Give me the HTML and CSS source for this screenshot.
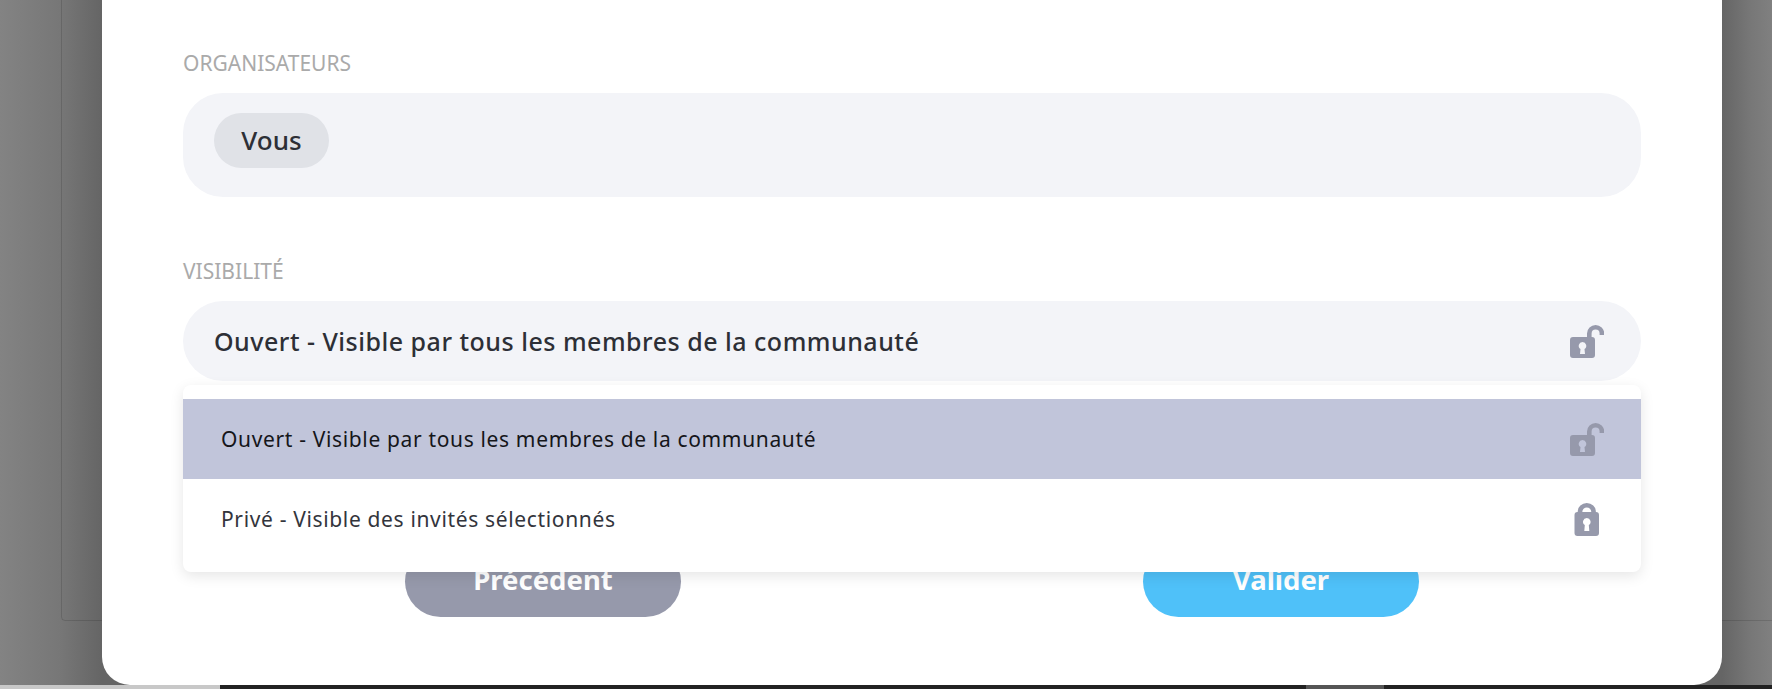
FILE: index.html
```html
<!DOCTYPE html>
<html lang="fr">

<head>
    <meta charset="UTF-8">
    <title>Organisateurs</title>
    <link rel="stylesheet" href="styles.css">
</head>

<body>
    <div class="behind"></div>

    <main class="modal">
        <h3 class="label">ORGANISATEURS</h3>
        <div class="box organisers">
            <span class="chip">Vous</span>
        </div>

        <h3 class="label second">VISIBILITÉ</h3>
        <div class="select">
            <div class="box chosen">
                <span>Ouvert - Visible par tous les membres de la communauté</span>
                <svg class="icon" viewBox="0 0 34 34"><use href="#open"></use></svg>
            </div>

            <ul class="dropdown">
                <li class="option active">
                    <span>Ouvert - Visible par tous les membres de la communauté</span>
                    <svg class="icon" viewBox="0 0 34 34"><use href="#open"></use></svg>
                </li>
                <li class="option">
                    <span>Privé - Visible des invités sélectionnés</span>
                    <svg class="icon" viewBox="0 0 34 34"><use href="#closed"></use></svg>
                </li>
            </ul>
        </div>

        <div class="buttons">
            <button class="btn grey"><span>Précédent</span></button>
            <button class="btn blue"><span>Valider</span></button>
        </div>
    </main>

    <footer class="strip">
        <div class="light"></div>
        <div class="tab"></div>
    </footer>

    <svg class="defs" width="0" height="0">
        <defs>
            <symbol id="open" viewBox="0 0 34 34">
                <path fill="#9699ab" fill-rule="evenodd" d="M3 13h19a3 3 0 0 1 3 3v15a3 3 0 0 1-3 3H3a3 3 0 0 1-3-3V16a3 3 0 0 1 3-3zm9.500 5a3.800 3.800 0 0 0-2 7l-.5 5h5l-.5-5a3.800 3.800 0 0 0-2-7z"/>
                <path fill="none" stroke="#9699ab" stroke-width="4.600" d="M19.300 13V9.500a6.300 6.300 0 0 1 12.600 0V11"/>
            </symbol>
            <symbol id="closed" viewBox="0 0 34 34">
                <path fill="#9699ab" fill-rule="evenodd" d="M7.500 10h18.500a3 3 0 0 1 3 3v18a3 3 0 0 1-3 3H7.500a3 3 0 0 1-3-3V13a3 3 0 0 1 3-3zm9.300 6a3.800 3.800 0 0 0-2 7l-.5 6h5l-.5-6a3.800 3.800 0 0 0-2-7z"/>
                <path fill="none" stroke="#9699ab" stroke-width="4.600" d="M10 12V10a6.800 6.800 0 0 1 13.600 0v2"/>
            </symbol>
        </defs>
    </svg>
</body>

</html>
```

FILE: styles.css
```css
* {
    box-sizing: border-box;
}

html,
body {
    margin: 0;
    height: 689px;
    overflow: hidden;
}

body {
    position: relative;
    font-family: "Noto Sans", sans-serif;
    background: linear-gradient(90deg, #838383 0, #777 60px, #656565 102px, #656565 1722px, #777 1750px, #808080 1772px);
}

/* the page under the modal, only its edge shows */
.behind {
    position: absolute;
    left: 61px;
    right: -10px;
    top: -10px;
    height: 631px;
    border: 1px solid rgba(0, 0, 0, 0.13);
    border-radius: 4px;
}

.modal {
    position: relative;
    width: 1620px;
    height: 685px;
    margin-left: 102px;
    padding: 50px 81px 0;
    background-color: white;
    border-radius: 0 0 28px 28px;
}

.label {
    margin: 0;
    height: 26px;
    font-size: 21px;
    line-height: 26px;
    font-weight: 400;
    color: #aaa;
}

.second {
    margin-top: 61px;
}

.box {
    display: flex;
    align-items: center;
    background-color: #f3f4f8;
}

.organisers {
    height: 104px;
    margin-top: 17px;
    padding: 0 31px 9px;
    border-radius: 40px;
}

.chip {
    width: 115px;
    height: 55px;
    border-radius: 28px;
    background-color: #e0e2e7;
    color: #2d2f36;
    font-size: 26px;
    font-weight: 500;
    line-height: 55px;
    text-align: center;
}

.select {
    position: relative;
    margin-top: 17px;
}

.chosen {
    height: 80px;
    justify-content: space-between;
    padding: 0 37px 0 31px;
    border-radius: 40px;
    color: #2d2f36;
    font-size: 25px;
    font-weight: 500;
    letter-spacing: 0.5px;
}

.icon {
    width: 34px;
    height: 34px;
}

.dropdown {
    position: absolute;
    z-index: 2;
    top: 84px;
    left: 0;
    right: 0;
    height: 187px;
    margin: 0;
    padding: 14px 0 0;
    list-style: none;
    background-color: white;
    border-radius: 8px;
    box-shadow: 0 4px 14px rgba(0, 0, 0, 0.1);
}

.option {
    display: flex;
    align-items: center;
    justify-content: space-between;
    height: 80px;
    padding: 0 37px 0 38px;
    color: #33353c;
    font-size: 21px;
    letter-spacing: 0.65px;
}

.active {
    background-color: #c1c5da;
    color: #15161a;
}

.buttons {
    display: flex;
    justify-content: space-between;
    margin-top: 165px;
    padding: 0 222px;
}

.btn {
    width: 276px;
    height: 71px;
    padding: 0 0 4px;
    border: 0;
    border-radius: 36px;
    color: white;
    font-family: inherit;
    font-size: 27.500px;
    font-weight: 700;
}

.grey {
    background-color: #9699ab;
}

.blue {
    background-color: #4fc1f9;
}

.strip {
    display: flex;
    height: 4px;
    background-color: #222;
}

.light {
    width: 220px;
    background-color: #c8c8c8;
}

.tab {
    width: 78px;
    margin-left: 1086px;
    background-color: #555;
}

.defs {
    position: absolute;
}
```
